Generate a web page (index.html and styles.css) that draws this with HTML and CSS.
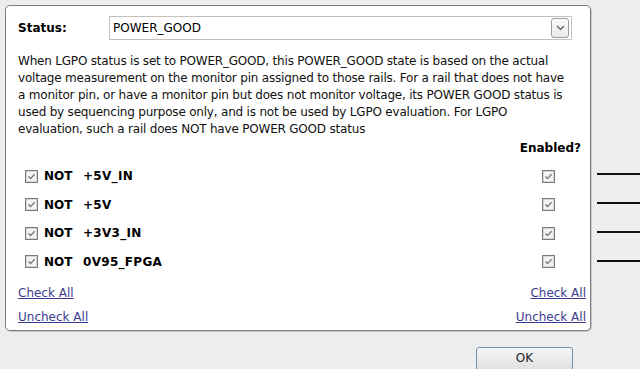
FILE: index.html
```html
<!DOCTYPE html>
<html><head><meta charset="utf-8"/>
<title>LGPO Status</title>
<link rel="stylesheet" href="styles.css">
</head>
<body>

<div class="top">
	<div class="panel">
		<div class="status">
			<label>Status:</label>
			<div class="select">
				<span>POWER_GOOD</span>
				<span class="drop"><svg width="9" height="6" viewBox="0 0 9 6"><path d="M1 1 L4.5 4.5 L8 1" fill="none" stroke="#555" stroke-width="1.2"/></svg></span>
			</div>
		</div>
		<p class="desc">When LGPO status is set to POWER_GOOD, this POWER_GOOD state is based on the actual<br>
voltage measurement on the monitor pin assigned to those rails. For a rail that does not have<br>
a monitor pin, or have a monitor pin but does not monitor voltage, its POWER GOOD status is<br>
used by sequencing purpose only, and is not be used by LGPO evaluation. For LGPO<br>
evaluation, such a rail does NOT have POWER GOOD status</p>
		<div class="head">Enabled?</div>
		<div class="rails" id="rails"></div>
		<div class="links">
			<div class="col"><a href="#">Check All</a><a href="#">Uncheck All</a></div>
			<div class="col right"><a href="#">Check All</a><a href="#">Uncheck All</a></div>
		</div>
	</div>
	<div class="wires">
		<div class="wire"></div><div class="wire"></div><div class="wire"></div><div class="wire"></div>
	</div>
</div>

<div class="bottom">
	<button class="ok">OK</button>
</div>

<script>
const rails = ["+5V_IN", "+5V", "+3V3_IN", "0V95_FPGA"];
const box = '<svg class="cb" width="13" height="13" viewBox="0 0 13 13"><rect x="0.5" y="0.5" width="12" height="12" fill="#f4f4f4" stroke="#7a7a7a"/><rect x="1.5" y="1.5" width="10" height="10" fill="none" stroke="#d6d6d6"/><path d="M3.5 6.5 L5.6 8.6 L9.6 4.2" fill="none" stroke="#767676" stroke-width="1.4"/></svg>';
const list = document.getElementById("rails");
for (const r of rails) {
	const row = document.createElement("div");
	row.className = "rail";
	row.innerHTML = `${box}<span class="not">NOT</span><span class="name">${r}</span><span class="en">${box}</span>`;
	list.appendChild(row);
}
</script>
</body>
</html>
```

FILE: styles.css
```css
html, body {
	margin: 0;
	height: 369px;
	overflow: hidden;
}
body {
	background-color: #ededed;
	font-family: "DejaVu Sans", sans-serif;
	font-size: 11px;
	color: #000;
}
.top {
	display: flex;
	padding-top: 5px;
	padding-left: 5px;
}
/* panel */
.panel {
	box-sizing: border-box;
	width: 586px;
	height: 326px;
	background-color: #fff;
	border: 1px solid #7d7d7d;
	border-radius: 5px;
	box-shadow: 1px 1px 0 #c8c8c8;
	padding: 0 0 0 12px;
}
.status {
	display: flex;
	align-items: center;
	margin-top: 10px;
}
.status label {
	width: 91px;
	font-weight: bold;
	font-size: 12px;
}
.select {
	box-sizing: border-box;
	width: 463px;
	height: 24px;
	border: 1px solid #c8bfb6;
	display: flex;
	align-items: center;
	justify-content: space-between;
	padding: 0 2px 0 3px;
	font-size: 12px;
}
.drop {
	box-sizing: border-box;
	width: 18px;
	height: 20px;
	border: 1px solid #9a9a9a;
	border-radius: 3px;
	background: linear-gradient(#fbfbfb, #e9e9e9);
	display: flex;
	align-items: center;
	justify-content: center;
}
.desc {
	margin: 13px 0 0 0;
	line-height: 17px;
	font-size: 12px;
	letter-spacing: -0.2px;
	white-space: nowrap;
	color: #111;
}
.head {
	margin-top: 2px;
	width: 563px;
	text-align: right;
	font-weight: bold;
	font-size: 12px;
	line-height: 16px;
}
.rails {
	margin-top: 6px;
}
.rail {
	display: flex;
	align-items: center;
	height: 28.5px;
	font-weight: bold;
	font-size: 12px;
}
.cb {
	display: block;
	margin-left: 7px;
}
.rail .not {
	width: 39px;
	margin-left: 6px;
}
.rail .name {
	width: 452px;
	letter-spacing: 0.3px;
}
/* links */
.links {
	display: flex;
	justify-content: space-between;
	margin-top: 9px;
	padding-right: 4px;
}
.links .col {
	display: flex;
	flex-direction: column;
	gap: 8px;
}
.links .right {
	align-items: flex-end;
}
.links a {
	color: #3b3b8f;
	line-height: 16px;
	font-size: 12px;
}
/* right side */
.wires {
	flex: 1;
	display: flex;
	flex-direction: column;
	gap: 27px;
	padding: 168px 0 0 6px;
}
.wire {
	height: 2px;
	background-color: #111;
}
/* footer */
.bottom {
	display: flex;
	padding: 16px 0 0 476px;
}
.ok {
	width: 97px;
	height: 26px;
	border: 1px solid #6f8fae;
	border-radius: 3px;
	background: linear-gradient(#f6f6f6, #dedede);
	font-family: "DejaVu Sans", sans-serif;
	font-size: 12px;
	color: #222;
	padding: 0 0 4px 0;
}
```
